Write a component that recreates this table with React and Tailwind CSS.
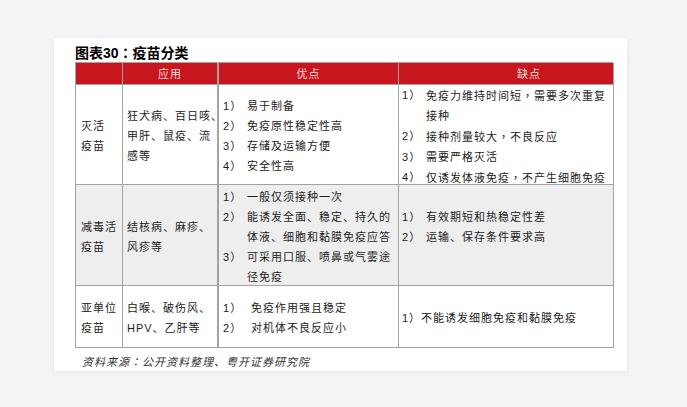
import React from "react";

const font = { fontFamily: '"Liberation Sans", "Noto Sans CJK SC", sans-serif' };

function P({ c }) {
  return <span style={{ fontFamily: '"Noto Sans CJK TC", sans-serif' }}>{c}</span>;
}

function Item({ n, children, w = "w-[24px]" }) {
  return (
    <div className="flex whitespace-nowrap">
      <span className={`${w} shrink-0`}>{n}）</span>
      <span>{children}</span>
    </div>
  );
}

const cell = "flex items-center border-r border-b border-[#a3a3a3] pt-[3px]";
const c1 = `${cell} pl-[5px]`;
const c2 = "flex items-center border-r-2 border-b border-[#a3a3a3] pt-[3px] pl-[4px]";
const c3 = `${cell} pl-[4px]`;
const c4 = `${cell} pl-[3px]`;

export default function App() {
  return (
    <div className="h-[407px] w-full bg-[#f4f5f7] pt-[38px] pl-[54px]" style={font}>
      <div className="w-[573px] h-[333px] bg-white shadow-[0_1px_6px_rgba(0,0,0,0.07)] pt-[6px] pl-[21px]">
        <div className="text-[14px] leading-[17px] font-bold text-black">
          图表30<P c="：" />疫苗分类
        </div>
        <div className="grid w-[538px] grid-cols-[47px_96px_180px_215px] grid-rows-[22px_100px_101px_62px] border-t border-l border-[#a3a3a3] text-[11px] leading-[20px] tracking-[1px] text-[#1c1c1c]">
          {/* header */}
          <div className="bg-[#c8161e] border-r border-b border-[#a3a3a3]"></div>
          <div className="bg-[#c8161e] border-r-2 border-b border-[#a3a3a3] flex items-center justify-center text-[#f7dcdd]">应用</div>
          <div className="bg-[#c8161e] border-r border-b border-[#a3a3a3] flex items-center justify-center text-[#f7dcdd]">优点</div>
          <div className="bg-[#c8161e] border-r border-b border-[#a3a3a3] flex items-center justify-center pl-[46px] text-[#f7dcdd]">缺点</div>

          {/* row 1 */}
          <div className={c1}>灭活<br />疫苗</div>
          <div className={`${c2} whitespace-nowrap`}>
            <div>狂犬病、百日咳、<br />甲肝、鼠疫、流<br />感等</div>
          </div>
          <div className={c3}>
            <div>
              <Item n="1">易于制备</Item>
              <Item n="2">免疫原性稳定性高</Item>
              <Item n="3">存储及运输方便</Item>
              <Item n="4">安全性高</Item>
            </div>
          </div>
          <div className={c4}>
            <div>
              <Item n="1">免疫力维持时间短<P c="，" />需要多次重复<br />接种</Item>
              <Item n="2">接种剂量较大<P c="，" />不良反应</Item>
              <Item n="3">需要严格灭活</Item>
              <Item n="4">仅诱发体液免疫<P c="，" />不产生细胞免疫</Item>
            </div>
          </div>

          {/* row 2 */}
          <div className={`${c1} bg-[#eeeeee] whitespace-nowrap`}>
            <div>减毒活<br />疫苗</div>
          </div>
          <div className={`${c2} bg-[#eeeeee] whitespace-nowrap`}>
            <div>结核病、麻疹、<br />风疹等</div>
          </div>
          <div className={`${c3} bg-[#eeeeee]`}>
            <div>
              <Item n="1">一般仅须接种一次</Item>
              <Item n="2">能诱发全面、稳定、持久的<br />体液、细胞和黏膜免疫应答</Item>
              <Item n="3">可采用口服、喷鼻或气雾途<br />径免疫</Item>
            </div>
          </div>
          <div className={`${c4} bg-[#eeeeee]`}>
            <div>
              <Item n="1">有效期短和热稳定性差</Item>
              <Item n="2">运输、保存条件要求高</Item>
              <div className="h-[20px]"></div>
            </div>
          </div>

          {/* row 3 */}
          <div className={`${c1} whitespace-nowrap`}>
            <div>亚单位<br />疫苗</div>
          </div>
          <div className={`${c2} whitespace-nowrap`}>
            <div>白喉、破伤风、<br />HPV、乙肝等</div>
          </div>
          <div className={c3}>
            <div>
              <Item n="1" w="w-[28px]">免疫作用强且稳定</Item>
              <Item n="2" w="w-[28px]">对机体不良反应小</Item>
            </div>
          </div>
          <div className={c4}>
            <div className="whitespace-nowrap">1）不能诱发细胞免疫和黏膜免疫</div>
          </div>
        </div>
        <div className="mt-[5px] pl-[7px] text-[11px] leading-[16px] tracking-[1px] italic text-[#333333]">
          资料来源<P c="：" />公开资料整理、粤开证券研究院
        </div>
      </div>
    </div>
  );
}
